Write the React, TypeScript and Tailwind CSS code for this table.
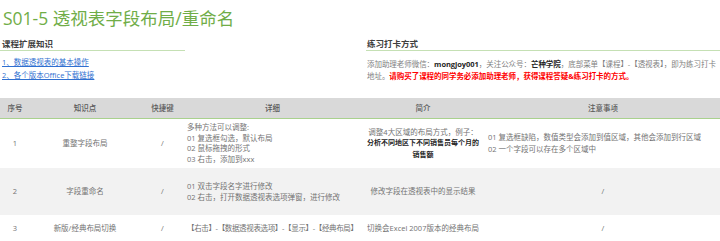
const font = "font-['Open_Sans','Noto_Sans_CJK_SC',sans-serif]"

const rows = [
  {
    no: '1',
    point: '重整字段布局',
    key: '/',
    detail: ['多种方法可以调整:', '01 复选框勾选，默认布局', '02 鼠标拖拽的形式', '03 右击，添加到xxx'],
    bg: 'bg-white',
    h: 'h-[50px]',
    track: '',
  },
  {
    no: '2',
    point: '字段重命名',
    key: '/',
    detail: ['01 双击字段名字进行修改', '02 右击，打开数据透视表选项弹窗，进行修改'],
    bg: 'bg-[#f2f2f2]',
    h: 'h-[47px]',
    track: '',
  },
  {
    no: '3',
    point: '新版/经典布局切换',
    key: '/',
    detail: ['【右击】-【数据透视表选项】-【显示】-【经典布局】'],
    bg: 'bg-white',
    h: 'h-[26px]',
    track: 'tracking-[-0.35px]',
  },
]

function Intro({ index }: { index: number }) {
  if (index === 0) {
    return (
      <>
        调整4大区域的布局方式，例子：
        <br />
        <span className="font-bold text-[#262626] text-[7px]">
          分析不同地区下不同销售员每个月的
          <br />
          销售额
        </span>
      </>
    )
  }
  if (index === 1) return <>修改字段在透视表中的显示结果</>
  return <>切换会Excel 2007版本的经典布局</>
}

function Notes({ index }: { index: number }) {
  if (index === 0) {
    return (
      <div className="text-left pl-[2px] leading-[12px] whitespace-nowrap">
        <div>01 复选框缺陷，数值类型会添加到值区域，其他会添加到行区域</div>
        <div>02 一个字段可以存在多个区域中</div>
      </div>
    )
  }
  return <div className="text-center">/</div>
}

export default function App() {
  return (
    <div className={`w-[720px] h-[241px] overflow-hidden bg-white ${font}`}>
      <h1 className="pt-[5px] pl-[3px] text-[17.5px] leading-[26px] text-[#70ad47] font-normal">
        S01-5 透视表字段布局/重命名
      </h1>

      <div className="flex mt-[8px]">
        <div className="w-[185px]">
          <div className="text-[8.5px] leading-[10px] font-bold text-[#404040] pl-[2px] pb-[1px] border-b border-[#c5e0b4]">
            课程扩展知识
          </div>
          <div className="mt-[5px] pl-[2px] text-[7.5px] leading-[12.5px] text-[#2f6fd0]">
            <div><span className="underline">1、数据透视表的基本操作</span></div>
            <div><span className="underline">2、各个版本Office下载链接</span></div>
          </div>
        </div>
        <div className="ml-auto w-[354px]">
          <div className="text-[8.5px] leading-[10px] font-bold text-[#404040] pl-[1px] pb-[1px] border-b border-[#c5e0b4]">
            练习打卡方式
          </div>
          <div className="mt-[8px] pl-[1px] text-[7.5px] leading-[11.5px] text-[#7f7f7f] whitespace-nowrap tracking-[-0.05px]">
            <div>
              添加助理老师微信：<span className="font-bold text-[#262626]">mongjoy001</span>，关注公众号：
              <span className="font-bold text-[#262626]">芒种学院</span>，底部菜单【课程】-【透视表】，即为练习打卡
            </div>
            <div>
              地址。<span className="font-bold text-[#ff0000]">请购买了课程的同学务必添加助理老师，获得课程答疑&amp;练习打卡的方式。</span>
            </div>
          </div>
        </div>
      </div>

      <table className="mt-[16px] w-[720px] table-fixed border-collapse text-[7.5px] leading-[10.5px] text-[#737373]">
        <colgroup>
          <col className="w-[30px]" />
          <col className="w-[110px]" />
          <col className="w-[45px]" />
          <col className="w-[175px]" />
          <col className="w-[126px]" />
          <col className="w-[234px]" />
        </colgroup>
        <thead>
          <tr className="h-[20px] bg-[#d9d9d9] border-b border-[#a9d18e] text-[#595959]">
            <th className="font-medium text-center">序号</th>
            <th className="font-medium text-center">知识点</th>
            <th className="font-medium text-center">快捷键</th>
            <th className="font-medium text-center">详细</th>
            <th className="font-medium text-center">简介</th>
            <th className="font-medium text-center">注意事项</th>
          </tr>
        </thead>
        <tbody>
          {rows.map((row, i) => (
            <tr key={row.no} className={`${row.bg} ${row.h}`}>
              <td className="text-center align-middle">{row.no}</td>
              <td className="text-center align-middle">{row.point}</td>
              <td className="text-center align-middle">{row.key}</td>
              <td className={`align-middle pl-[2px] whitespace-nowrap ${row.track}`}>
                {row.detail.map((line) => (
                  <div key={line}>{line}</div>
                ))}
              </td>
              <td className="text-center align-middle whitespace-nowrap">
                <Intro index={i} />
              </td>
              <td className="align-middle">
                <Notes index={i} />
              </td>
            </tr>
          ))}
        </tbody>
      </table>
    </div>
  )
}
